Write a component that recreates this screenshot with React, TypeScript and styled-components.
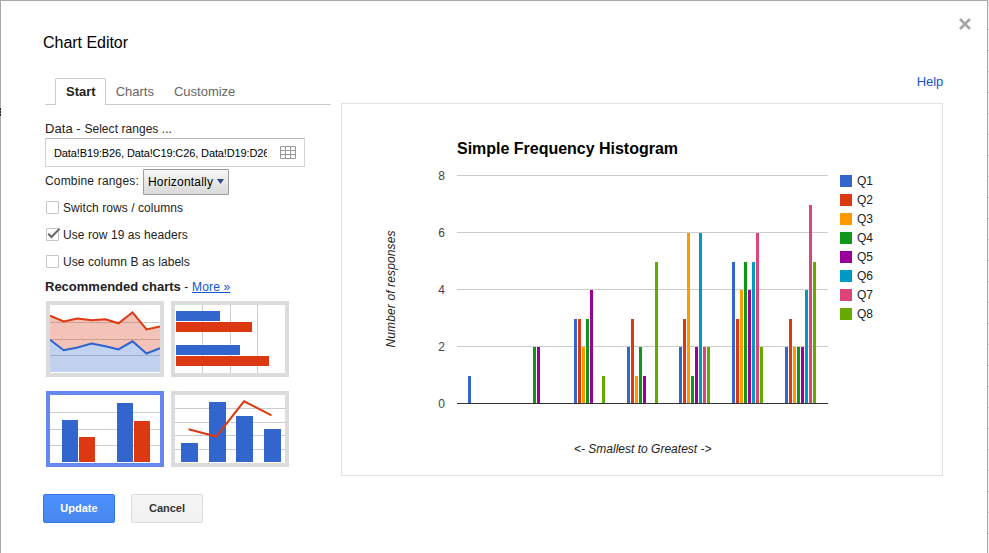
import React from "react";
import styled, { createGlobalStyle } from "styled-components";

const GlobalStyle = createGlobalStyle`
  * { box-sizing: border-box; }
  body {
    margin: 0;
    background: #fff;
    font-family: "Liberation Sans", Arial, sans-serif;
    overflow: hidden;
  }
  button { font-family: inherit; }
`;

const Page = styled.div`
  display: grid;
  grid-template-columns: 988px 1px;
  height: 553px;
`;

const SheetEdge = styled.div`
  background: repeating-linear-gradient(to bottom, #f1f1f1 0 20px, #c4c4c4 20px 21px);
  background-position: 0 9px;
`;

const Dialog = styled.main`
  position: relative;
  display: grid;
  grid-template-rows: 76px 417px 59px;
  background: #fff;
  border: 1px solid #a9a9a9;
  border-bottom: 0;
  height: 553px;
`;

/* Sliver of the sheet's cell text that shows along the dialog's edge. */
const CellSliver = styled.span`
  position: absolute;
  left: -1px;
  top: 107px;
  width: 1px;
  height: 8px;
  background: linear-gradient(#222 0 2px, #888 2px 3px, #222 3px 5px, #888 5px 6px, #222 6px);
`;

const Header = styled.header`
  display: flex;
  justify-content: space-between;
  align-items: flex-start;
  padding: 32px 16px 0 42px;
`;

const Title = styled.h1`
  margin: 0;
  font-size: 16px;
  line-height: 20px;
  font-weight: 400;
  color: #000;
  letter-spacing: -0.03px;
`;

const CloseButton = styled.button`
  display: flex;
  margin: -15px 0 0;
  padding: 0;
  border: 0;
  background: none;
`;

const Body = styled.div`
  display: grid;
  grid-template-columns: 286px 602px;
  column-gap: 10px;
  padding-left: 44px;
`;

const Settings = styled.section`
  display: flex;
  flex-direction: column;
  color: #222;
  font-size: 12px;
`;

const Tabs = styled.nav`
  display: flex;
  height: 28px;
  padding: 1px 0 0 10px;
  border-bottom: 1px solid #ccc;
`;

const Tab = styled.button<{ $active?: boolean }>`
  height: ${(p) => (p.$active ? 27 : 26)}px;
  padding: ${(p) => (p.$active ? "0 9px 1px 10px" : "0 9px 0 10px")};
  border: 1px solid ${(p) => (p.$active ? "#ccc" : "transparent")};
  border-bottom: 0;
  border-radius: 2px 2px 0 0;
  background: ${(p) => (p.$active ? "#fff" : "transparent")};
  color: ${(p) => (p.$active ? "#222" : "#666")};
  font-size: 13px;
  line-height: 24px;
  font-weight: ${(p) => (p.$active ? 700 : 400)};
  white-space: nowrap;
  & + & { margin-left: -1px; }
`;

const RangeLabel = styled.div`
  height: 33px;
  padding-top: 16px;
  line-height: 16px;
  letter-spacing: 0.05px;
  span { font-size: 13px; }
`;

const RangeField = styled.div`
  display: flex;
  align-items: center;
  justify-content: space-between;
  width: 260px;
  height: 29px;
  padding: 0 8px;
  border: 1px solid #d3d3d3;
  border-top-color: #bdbdbd;
`;

const RangeText = styled.span`
  width: 213px;
  overflow: hidden;
  white-space: nowrap;
  color: #000;
  font-size: 11px;
  line-height: 16px;
  letter-spacing: -0.12px;
`;

const CombineRow = styled.div`
  display: flex;
  align-items: flex-start;
  height: 34px;
  padding-top: 2px;
  line-height: 24px;
  letter-spacing: 0.17px;
`;

const Select = styled.button`
  display: flex;
  align-items: center;
  justify-content: space-between;
  width: 86px;
  height: 26px;
  margin-left: auto;
  padding: 0 4px;
  border: 1px solid #9c9c9c;
  border-radius: 1px;
  background: linear-gradient(#f7f7f7, #d9d9d9);
  color: #000;
  font-size: 12px;
  letter-spacing: 0.2px;
  svg { margin-bottom: 2px; }
`;

const CombineInner = styled.div`
  display: flex;
  width: 184px;
`;

const CheckRow = styled.label`
  display: flex;
  align-items: center;
  gap: 3px;
  height: 27px;
  padding-bottom: 14px;
  line-height: 14px;
  letter-spacing: 0.07px;
`;

const CheckRows = styled.div`
  height: 79px;
`;

const CheckBox = styled.span`
  display: flex;
  flex: none;
  width: 15px;
  height: 13px;
  padding-left: 1px;
`;

const Recommended = styled.div`
  height: 21px;
  line-height: 14px;
  letter-spacing: 0.17px;
  white-space: nowrap;
  b { font-size: 13px; letter-spacing: 0; }
`;

const Link = styled.a`
  color: #15c;
  text-decoration: underline;
`;

const Thumbs = styled.div`
  display: grid;
  grid-template-columns: 118px 118px;
  gap: 14px 7px;
  padding-left: 1px;
`;

const Thumb = styled.button<{ $selected?: boolean }>`
  display: block;
  width: 118px;
  height: 76px;
  padding: 0;
  border: 4px solid ${(p) => (p.$selected ? "#6688ee" : "#dcdcdc")};
  background: #fff;
  svg { display: block; }
`;

const Preview = styled.section`
  display: flex;
  flex-direction: column;
`;

const HelpRow = styled.div`
  display: flex;
  justify-content: flex-end;
  height: 26px;
  font-size: 13px;
  line-height: 10px;
  letter-spacing: -0.15px;
  a { color: #15c; text-decoration: none; }
`;

const ChartFrame = styled.div`
  width: 602px;
  height: 373px;
  border: 1px solid #e2e2e2;
  svg { display: block; }
`;

const Footer = styled.footer`
  display: flex;
  gap: 16px;
  padding-left: 42px;
`;

const Action = styled.button<{ $primary?: boolean }>`
  width: 72px;
  height: 29px;
  padding: 0;
  border: 1px solid ${(p) => (p.$primary ? "#3079ed" : "#dcdcdc")};
  border-radius: 2px;
  background: ${(p) =>
    p.$primary ? "linear-gradient(#4d90fe, #4787ed)" : "linear-gradient(#f5f5f5, #f1f1f1)"};
  color: ${(p) => (p.$primary ? "#fff" : "#333")};
  font-size: 11px;
  font-weight: 700;
  line-height: 27px;
`;

const COLORS = ["#3366cc", "#dc3912", "#ff9900", "#109618", "#990099", "#0099c6", "#dd4477", "#66aa00"];

const GROUPS = [
  { x: 468, values: [1, 0, 0, 0, 0, 0, 0, 0] },
  { x: 521, values: [0, 0, 0, 2, 2, 0, 0, 0] },
  { x: 574, values: [3, 3, 2, 3, 4, 0, 0, 1] },
  { x: 627, values: [2, 3, 1, 2, 1, 0, 0, 5] },
  { x: 679, values: [2, 3, 6, 1, 2, 6, 2, 2] },
  { x: 732, values: [5, 3, 4, 5, 4, 5, 6, 2] },
  { x: 785, values: [2, 3, 2, 2, 2, 4, 7, 5] },
];

const TICKS = [0, 2, 4, 6, 8];
const BASE = 403;

function Histogram() {
  return (
    <svg width="600" height="371" viewBox="342 104 600 371" fontFamily="Liberation Sans, Arial, sans-serif">
      <text x="457" y="154" fontSize="16" fontWeight="700" textLength="221">
        Simple Frequency Histogram
      </text>
      {TICKS.map((t) => (
        <g key={t}>
          <rect x="457" y={BASE - t * 28.5} width="371" height="1" fill="#ccc" />
          <text x="445" y={BASE - t * 28.5 + 5} fontSize="12" textAnchor="end" fill="#444">
            {t}
          </text>
        </g>
      ))}
      {GROUPS.map((g) =>
        g.values.map((v, i) => {
          if (!v) return null;
          const h = Math.floor(v * 28.5) - 1;
          return <rect key={`${g.x}-${i}`} x={g.x + i * 4} y={BASE - h} width="3" height={h} fill={COLORS[i]} />;
        })
      )}
      <rect x="457" y={BASE} width="371" height="1" fill="#333" />
      {COLORS.map((c, i) => (
        <g key={c}>
          <rect x="840" y={175 + i * 19} width="12" height="12" fill={c} />
          <text x="857" y={185 + i * 19} fontSize="12" fill="#222">{`Q${i + 1}`}</text>
        </g>
      ))}
      <text x="574" y="453" fontSize="12" fontStyle="italic" fill="#222" textLength="137.5">
        {"<- Smallest to Greatest ->"}
      </text>
      <text
        transform="translate(395 347.5) rotate(-90)"
        fontSize="12"
        fontStyle="italic"
        fill="#222"
        textLength="117"
      >
        Number of responses
      </text>
    </svg>
  );
}

function HLines({ ys }: { ys: number[] }) {
  return (
    <>
      {ys.map((y) => (
        <rect key={y} x="0" y={y} width="110" height="1" fill="#ccc" />
      ))}
    </>
  );
}

const RED_LINE = "0,10.7 13.7,16.4 27.5,13.4 41.5,15.3 55.5,14.3 68.5,18.3 82.5,7.3 96.5,24.4 110,21.5";
const BLUE_LINE = "0,34.7 13.7,45.3 27.5,42.5 41.5,38.5 55.5,41.3 68.5,44.4 82.5,36.3 96.5,48.5 110,43.3";

function AreaThumb() {
  return (
    <svg width="110" height="68">
      <HLines ys={[17, 34, 50]} />
      <polygon points={`${RED_LINE} 110,43.3 96.5,48.5 82.5,36.3 68.5,44.4 55.5,41.3 41.5,38.5 27.5,42.5 13.7,45.3 0,34.7`} fill="#dc3912" fillOpacity="0.3" />
      <polygon points={`${BLUE_LINE} 110,67 0,67`} fill="#3366cc" fillOpacity="0.3" />
      <polyline points={RED_LINE} fill="none" stroke="#dc3912" strokeWidth="2" />
      <polyline points={BLUE_LINE} fill="none" stroke="#2c63d0" strokeWidth="2" />
    </svg>
  );
}

function BarThumb() {
  return (
    <svg width="110" height="68">
      {[27, 55, 82].map((x) => (
        <rect key={x} x={x} y="0" width="1" height="68" fill="#ccc" />
      ))}
      <rect x="1" y="6" width="44" height="10" fill="#3366cc" />
      <rect x="1" y="17" width="76" height="10" fill="#dc3912" />
      <rect x="1" y="40" width="64" height="10" fill="#3366cc" />
      <rect x="1" y="51" width="93" height="10" fill="#dc3912" />
    </svg>
  );
}

function ColumnThumb() {
  return (
    <svg width="110" height="68">
      <HLines ys={[17, 34, 50]} />
      <rect x="12" y="25" width="16" height="42" fill="#3366cc" />
      <rect x="29" y="42" width="16" height="25" fill="#dc3912" />
      <rect x="67" y="8" width="16" height="59" fill="#3366cc" />
      <rect x="84" y="26" width="16" height="41" fill="#dc3912" />
    </svg>
  );
}

function ComboThumb() {
  return (
    <svg width="110" height="68">
      <HLines ys={[13, 27, 40, 54]} />
      <rect x="6" y="48" width="17" height="19" fill="#3366cc" />
      <rect x="34" y="7" width="17" height="60" fill="#3366cc" />
      <rect x="61" y="21" width="17" height="46" fill="#3366cc" />
      <rect x="89" y="34" width="17" height="33" fill="#3366cc" />
      <polyline points="13.5,34.3 41.3,41.5 69,6.3 96.5,20.3" fill="none" stroke="#dc3912" strokeWidth="2" />
    </svg>
  );
}

function GridIcon() {
  return (
    <svg width="16" height="13" viewBox="0 0 16 13">
      <path d="M.5 .5h15v12h-15zM5.5 0v13M10.5 0v13M0 4.5h16M0 8.5h16" fill="none" stroke="#999" />
    </svg>
  );
}

function Check({ checked, children }: { checked?: boolean; children: React.ReactNode }) {
  return (
    <CheckRow>
      <CheckBox>
        <svg width="14" height="13" viewBox="0 0 14 13" overflow="visible">
          <rect x=".5" y=".5" width="12" height="12" rx=".5" fill="#fff" stroke="#c6c6c6" />
          {checked && <path d="M2.2 5.8L5.5 9L13.6 .6" fill="none" stroke="#666" strokeWidth="2" />}
        </svg>
      </CheckBox>
      {children}
    </CheckRow>
  );
}

export default function App() {
  return (
    <>
      <GlobalStyle />
      <Page>
        <Dialog>
          <CellSliver />
          <Header>
            <Title>Chart Editor</Title>
            <CloseButton aria-label="Close">
              <svg width="12" height="12" viewBox="0 0 12 12">
                <path d="M1 1l10 10M11 1l-10 10" stroke="#a6a6a6" strokeWidth="2.6" />
              </svg>
            </CloseButton>
          </Header>
          <Body>
            <Settings>
              <Tabs>
                <Tab $active>Start</Tab>
                <Tab>Charts</Tab>
                <Tab>Customize</Tab>
              </Tabs>
              <RangeLabel>
                <span>Data - </span>Select ranges ...
              </RangeLabel>
              <RangeField>
                <RangeText>Data!B19:B26, Data!C19:C26, Data!D19:D26</RangeText>
                <GridIcon />
              </RangeField>
              <CombineRow>
                <CombineInner>
                  Combine ranges:
                  <Select>
                    Horizontally
                    <svg width="7" height="5" viewBox="0 0 7 5">
                      <path d="M0 0h7L3.5 5z" fill="#2b4a84" />
                    </svg>
                  </Select>
                </CombineInner>
              </CombineRow>
              <CheckRows>
                <Check>Switch rows / columns</Check>
                <Check checked>Use row 19 as headers</Check>
                <Check>Use column B as labels</Check>
              </CheckRows>
              <Recommended>
                <b>Recommended charts</b> - <Link>More »</Link>
              </Recommended>
              <Thumbs>
                <Thumb><AreaThumb /></Thumb>
                <Thumb><BarThumb /></Thumb>
                <Thumb $selected><ColumnThumb /></Thumb>
                <Thumb><ComboThumb /></Thumb>
              </Thumbs>
            </Settings>
            <Preview>
              <HelpRow>
                <a>Help</a>
              </HelpRow>
              <ChartFrame>
                <Histogram />
              </ChartFrame>
            </Preview>
          </Body>
          <Footer>
            <Action $primary>Update</Action>
            <Action>Cancel</Action>
          </Footer>
        </Dialog>
        <SheetEdge />
      </Page>
    </>
  );
}
